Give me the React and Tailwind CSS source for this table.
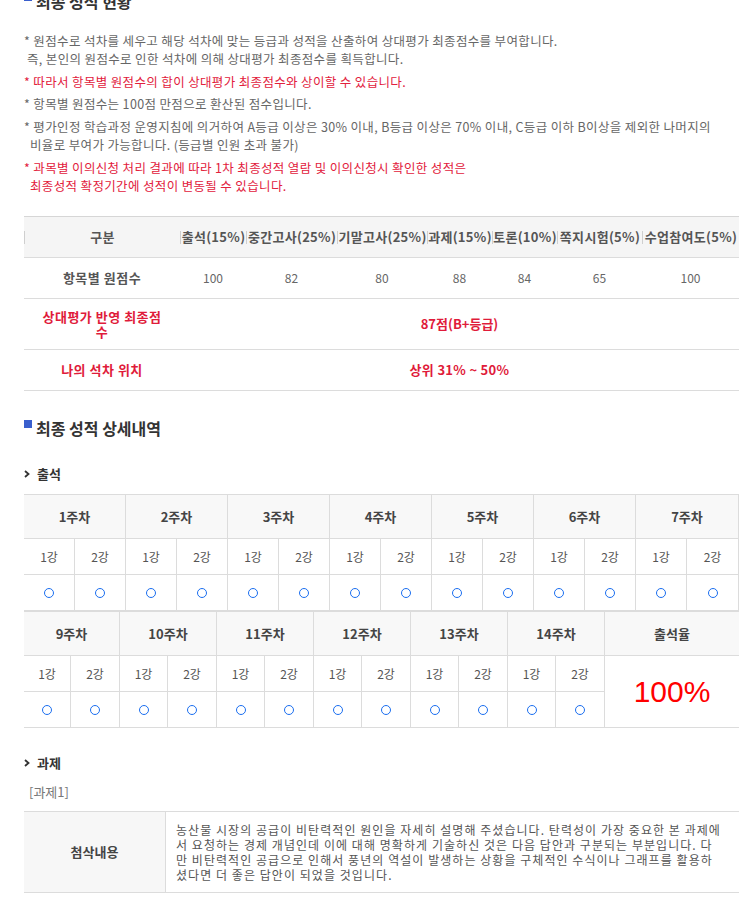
import React from "react";

const Chevron = () => (
  <svg width="6" height="8" viewBox="0 0 6 8" className="mr-[7px] shrink-0">
    <polyline points="1,1 4.5,4 1,7" fill="none" stroke="#333" strokeWidth="1.8" />
  </svg>
);

const Circle = () => (
  <div className="w-[10px] h-[10px] rounded-full border border-[#1a6ef0]" />
);

const summaryHead = ["구분", "출석(15%)", "중간고사(25%)", "기말고사(25%)", "과제(15%)", "토론(10%)", "쪽지시험(5%)", "수업참여도(5%)"];
const summaryVals = ["100", "82", "80", "88", "84", "65", "100"];

const weeks1 = ["1주차", "2주차", "3주차", "4주차", "5주차", "6주차", "7주차"];
const weeks2 = ["9주차", "10주차", "11주차", "12주차", "13주차", "14주차"];

export default function App() {
  return (
    <div className="w-[739px] h-[905px] overflow-hidden bg-white font-['Noto_Sans_CJK_KR',sans-serif]">
      <div className="pl-6 w-[739px] mt-[-10px]">
        {/* Heading 1 */}
        <div className="flex items-start h-[22px]">
          <div className="w-2 h-2 bg-[#3a5fcd] mt-[3px] mr-1" />
          <div className="text-[16px] font-bold leading-[22px] text-[#333]">최종 성적 현황</div>
        </div>

        {/* Notes */}
        <div className="mt-[20px] text-[12.5px] leading-[18px] tracking-[0.35px] text-[#666]">
          <div>* 원점수로 석차를 세우고 해당 석차에 맞는 등급과 성적을 산출하여 상대평가 최종점수를 부여합니다.</div>
          <div className="pl-[3px]">즉, 본인의 원점수로 인한 석차에 의해 상대평가 최종점수를 획득합니다.</div>
          <div className="mt-[5px] text-[#e2203c]">* 따라서 항목별 원점수의 합이 상대평가 최종점수와 상이할 수 있습니다.</div>
          <div className="mt-[4px]">* 항목별 원점수는 100점 만점으로 환산된 점수입니다.</div>
          <div className="mt-[5px] whitespace-nowrap">* 평가인정 학습과정 운영지침에 의거하여 A등급 이상은 30% 이내, B등급 이상은 70% 이내, C등급 이하 B이상을 제외한 나머지의</div>
          <div className="pl-[6px]">비율로 부여가 가능합니다. (등급별 인원 초과 불가)</div>
          <div className="mt-[5px] text-[#e2203c]">* 과목별 이의신청 처리 결과에 따라 1차 최종성적 열람 및 이의신청시 확인한 성적은</div>
          <div className="pl-[6px] text-[#e2203c]">최종성적 확정기간에 성적이 변동될 수 있습니다.</div>
        </div>

        {/* Summary table */}
        <div className="mt-[21px] w-[715px] border-t border-[#d6d6d6] text-[13px]">
          <div className="grid grid-cols-[156px_66px_91px_90px_65px_65px_85px_97px] h-[41px] bg-[#f5f5f5] border-b border-[#dcdcdc]">
            {summaryHead.map((h) => (
              <div key={h} className="flex items-center">
                <div className="w-px h-[13px] bg-[#cfcfcf] shrink-0" />
                <div className="flex-1 text-center font-bold text-[#555] whitespace-nowrap tracking-[0.3px]">{h}</div>
              </div>
            ))}
          </div>
          <div className="grid grid-cols-[156px_66px_91px_90px_65px_65px_85px_97px] h-[41px] border-b border-[#dcdcdc] items-center">
            <div className="text-center font-bold text-[#555] tracking-[0.5px]">항목별 원점수</div>
            {summaryVals.map((v, i) => (
              <div key={i} className="text-center text-[12px] text-[#666]">{v}</div>
            ))}
          </div>
          <div className="grid grid-cols-[156px_559px] h-[51px] border-b border-[#dcdcdc] items-center font-bold text-[#e01b3a]">
            <div className="text-center leading-[15px] tracking-[0.5px]">상대평가 반영 최종점<br />수</div>
            <div className="text-center">87점(B+등급)</div>
          </div>
          <div className="grid grid-cols-[156px_559px] h-[41px] border-b border-[#dcdcdc] items-center font-bold text-[#e01b3a]">
            <div className="text-center tracking-[0.5px]">나의 석차 위치</div>
            <div className="text-center tracking-[0.3px]">상위 31% ~ 50%</div>
          </div>
        </div>

        {/* Heading 2 */}
        <div className="mt-[26px] flex items-start h-[22px]">
          <div className="w-2 h-2 bg-[#3a5fcd] mt-[3px] mr-1" />
          <div className="text-[16px] font-bold leading-[22px] text-[#333]">최종 성적 상세내역</div>
        </div>

        {/* 출석 */}
        <div className="mt-[26px] flex items-center h-[18px]">
          <Chevron />
          <div className="text-[13px] font-bold text-[#333]">출석</div>
        </div>

        <div className="mt-[11px] w-[715px] border-t border-[#dcdcdc]">
          <div className="grid grid-cols-[repeat(13,51px)_52px]">
            {weeks1.map((w) => (
              <div key={w} className="col-span-2 h-[44px] bg-[#f8f8f8] border-b border-r border-[#dcdcdc] flex items-center justify-center text-[13px] font-bold text-[#444]">
                {w}
              </div>
            ))}
            {weeks1.map((w) => (
              <React.Fragment key={w + "a"}>
                <div className="h-[36px] border-b border-r border-[#dcdcdc] flex items-center justify-center text-[12px] text-[#555]">1강</div>
                <div className="h-[36px] border-b border-r border-[#dcdcdc] flex items-center justify-center text-[12px] text-[#555]">2강</div>
              </React.Fragment>
            ))}
            {weeks1.map((w) => (
              <React.Fragment key={w + "b"}>
                <div className="h-[36px] border-b border-r border-[#dcdcdc] flex items-center justify-center"><Circle /></div>
                <div className="h-[36px] border-b border-r border-[#dcdcdc] flex items-center justify-center"><Circle /></div>
              </React.Fragment>
            ))}
          </div>
        </div>

        <div className="w-[715px] border-t border-[#dcdcdc]">
          <div className="grid grid-cols-[47px_49px_repeat(5,48px_49px)_134px] grid-rows-[44px_36px_36px]">
            {weeks2.map((w) => (
              <div key={w} className="col-span-2 bg-[#f8f8f8] border-b border-r border-[#dcdcdc] flex items-center justify-center text-[13px] font-bold text-[#444]">
                {w}
              </div>
            ))}
            <div className="col-start-13 row-start-1 bg-[#f8f8f8] border-b border-[#dcdcdc] flex items-center justify-center text-[13px] font-bold text-[#444]">
              출석율
            </div>
            <div className="col-start-13 row-start-2 row-span-2 border-b border-[#dcdcdc] flex items-center justify-center font-['Liberation_Sans',sans-serif] text-[30px] text-[#ff0000]">
              100%
            </div>
            {weeks2.map((w, i) => (
              <React.Fragment key={w + "a"}>
                <div className="row-start-2 border-b border-r border-[#dcdcdc] flex items-center justify-center text-[12px] text-[#555]" style={{ gridColumnStart: i * 2 + 1 }}>1강</div>
                <div className="row-start-2 border-b border-r border-[#dcdcdc] flex items-center justify-center text-[12px] text-[#555]" style={{ gridColumnStart: i * 2 + 2 }}>2강</div>
                <div className="row-start-3 border-b border-r border-[#dcdcdc] flex items-center justify-center" style={{ gridColumnStart: i * 2 + 1 }}><Circle /></div>
                <div className="row-start-3 border-b border-r border-[#dcdcdc] flex items-center justify-center" style={{ gridColumnStart: i * 2 + 2 }}><Circle /></div>
              </React.Fragment>
            ))}
          </div>
        </div>

        {/* 과제 */}
        <div className="mt-[26px] flex items-center h-[18px]">
          <Chevron />
          <div className="text-[13px] font-bold text-[#333]">과제</div>
        </div>
        <div className="mt-[11px] h-[18px] pl-[5px] text-[13px] leading-[18px] text-[#777]">[과제1]</div>

        <div className="mt-[10px] w-[715px] border-t border-b border-[#dcdcdc] flex h-[82px]">
          <div className="w-[142px] shrink-0 bg-[#f7f7f7] border-r border-[#dcdcdc] flex items-center justify-center text-[13px] font-bold text-[#444]">
            첨삭내용
          </div>
          <div className="flex-1 pl-[10px] flex flex-col justify-center text-[12px] leading-[15px] text-[#555] tracking-[1.05px] whitespace-nowrap">
            <div>농산물 시장의 공급이 비탄력적인 원인을 자세히 설명해 주셨습니다. 탄력성이 가장 중요한 본 과제에</div>
            <div>서 요청하는 경제 개념인데 이에 대해 명확하게 기술하신 것은 다음 답안과 구분되는 부분입니다. 다</div>
            <div>만 비탄력적인 공급으로 인해서 풍년의 역설이 발생하는 상황을 구체적인 수식이나 그래프를 활용하</div>
            <div>셨다면 더 좋은 답안이 되었을 것입니다.</div>
          </div>
        </div>
      </div>
    </div>
  );
}
